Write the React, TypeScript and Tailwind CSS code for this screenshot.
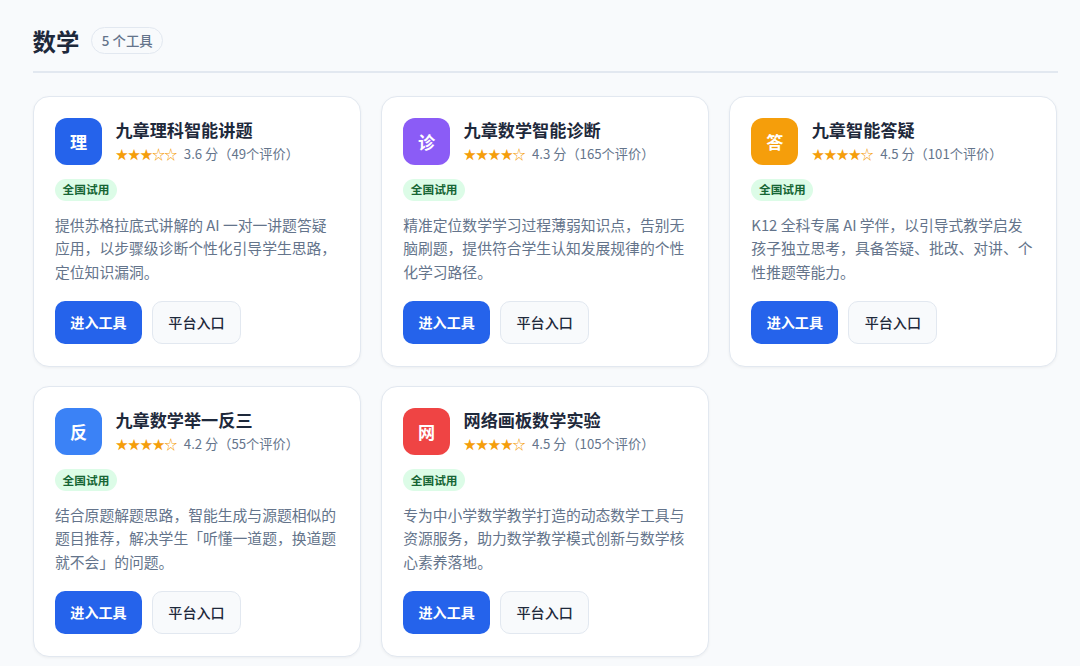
const tools = [
  { icon: "理", color: "bg-[#2563eb]", name: "九章理科智能讲题", stars: "★★★☆☆", score: "3.6 分（49个评价）", desc: "提供苏格拉底式讲解的 AI 一对一讲题答疑应用，以步骤级诊断个性化引导学生思路，定位知识漏洞。" },
  { icon: "诊", color: "bg-[#8b5cf6]", name: "九章数学智能诊断", stars: "★★★★☆", score: "4.3 分（165个评价）", desc: "精准定位数学学习过程薄弱知识点，告别无脑刷题，提供符合学生认知发展规律的个性化学习路径。" },
  { icon: "答", color: "bg-[#f59e0b]", name: "九章智能答疑", stars: "★★★★☆", score: "4.5 分（101个评价）", desc: "K12 全科专属 AI 学伴，以引导式教学启发孩子独立思考，具备答疑、批改、对讲、个性推题等能力。" },
  { icon: "反", color: "bg-[#3b82f6]", name: "九章数学举一反三", stars: "★★★★☆", score: "4.2 分（55个评价）", desc: "结合原题解题思路，智能生成与源题相似的题目推荐，解决学生「听懂一道题，换道题就不会」的问题。" },
  { icon: "网", color: "bg-[#ef4444]", name: "网络画板数学实验", stars: "★★★★☆", score: "4.5 分（105个评价）", desc: "专为中小学数学教学打造的动态数学工具与资源服务，助力数学教学模式创新与数学核心素养落地。" },
]

type Tool = (typeof tools)[number]

const Card = ({ tool }: { tool: Tool }) => {
  return (
    <div className="h-[271px] rounded-[16px] border border-[#e2e8f0] bg-white px-[21.5px] pt-[20.7px] shadow-[0_1px_3px_rgba(0,0,0,0.05)]">
      <div className="flex h-[47px] gap-[13.4px]">
        <div className={`flex h-[47px] w-[47px] shrink-0 items-center justify-center rounded-[12px] text-[17.1px] font-bold text-white ${tool.color}`}>{tool.icon}</div>
        <div>
          <h3 className="text-[17.15px] leading-[24px] font-bold">{tool.name}</h3>
          <div className="flex items-center whitespace-nowrap text-[13.2px] leading-[23px] text-[#64748b]">
            <span className="mr-[7px] text-[12.7px] tracking-[-0.4px] text-[#f59e0b]">{tool.stars}</span>
            <span>{tool.score}</span>
          </div>
        </div>
      </div>
      <span className="mt-[14px] flex h-[22px] w-[62px] items-center justify-center rounded-full bg-[#dcfce7] pb-[1.5px] text-[11.7px] font-bold text-[#166534]">全国试用</span>
      <p className="mt-[11.7px] -mr-[4px] w-[284px] text-[14.8px] leading-[23.7px] text-[#64748b]">{tool.desc}</p>
      <div className="mt-[17.5px] flex gap-[10px]">
        <button className="h-[43px] w-[87px] rounded-[10px] bg-[#2563eb] text-[14.1px] font-bold text-white">进入工具</button>
        <button className="h-[43px] w-[89px] rounded-[10px] border border-[#e2e8f0] bg-[#f8fafc] text-[14.1px] font-medium">平台入口</button>
      </div>
    </div>
  )
}

export default function App() {
  return (
    <div className="h-[666px] overflow-hidden bg-[#f8fafc] pr-[22.5px] pl-[32.5px] pt-[24px] font-['Noto_Sans_CJK_SC',sans-serif] text-[#1e293b]">
      <div className="flex h-[48.5px] items-start gap-[12px] border-b-2 border-[#e2e8f0]">
        <h2 className="text-[23.4px] leading-[34px] font-bold">数学</h2>
        <span className="mt-[3px] flex h-[27px] w-[72px] items-center justify-center rounded-full border border-[#e2e8f0] bg-[#f8fafc] text-[13.4px] font-medium text-[#64748b]">5 个工具</span>
      </div>
      <div className="mt-[23.8px] grid grid-cols-3 gap-x-[19.5px] gap-y-[19.1px]">
        {tools.map((tool) => (
          <Card key={tool.name} tool={tool} />
        ))}
      </div>
    </div>
  )
}
